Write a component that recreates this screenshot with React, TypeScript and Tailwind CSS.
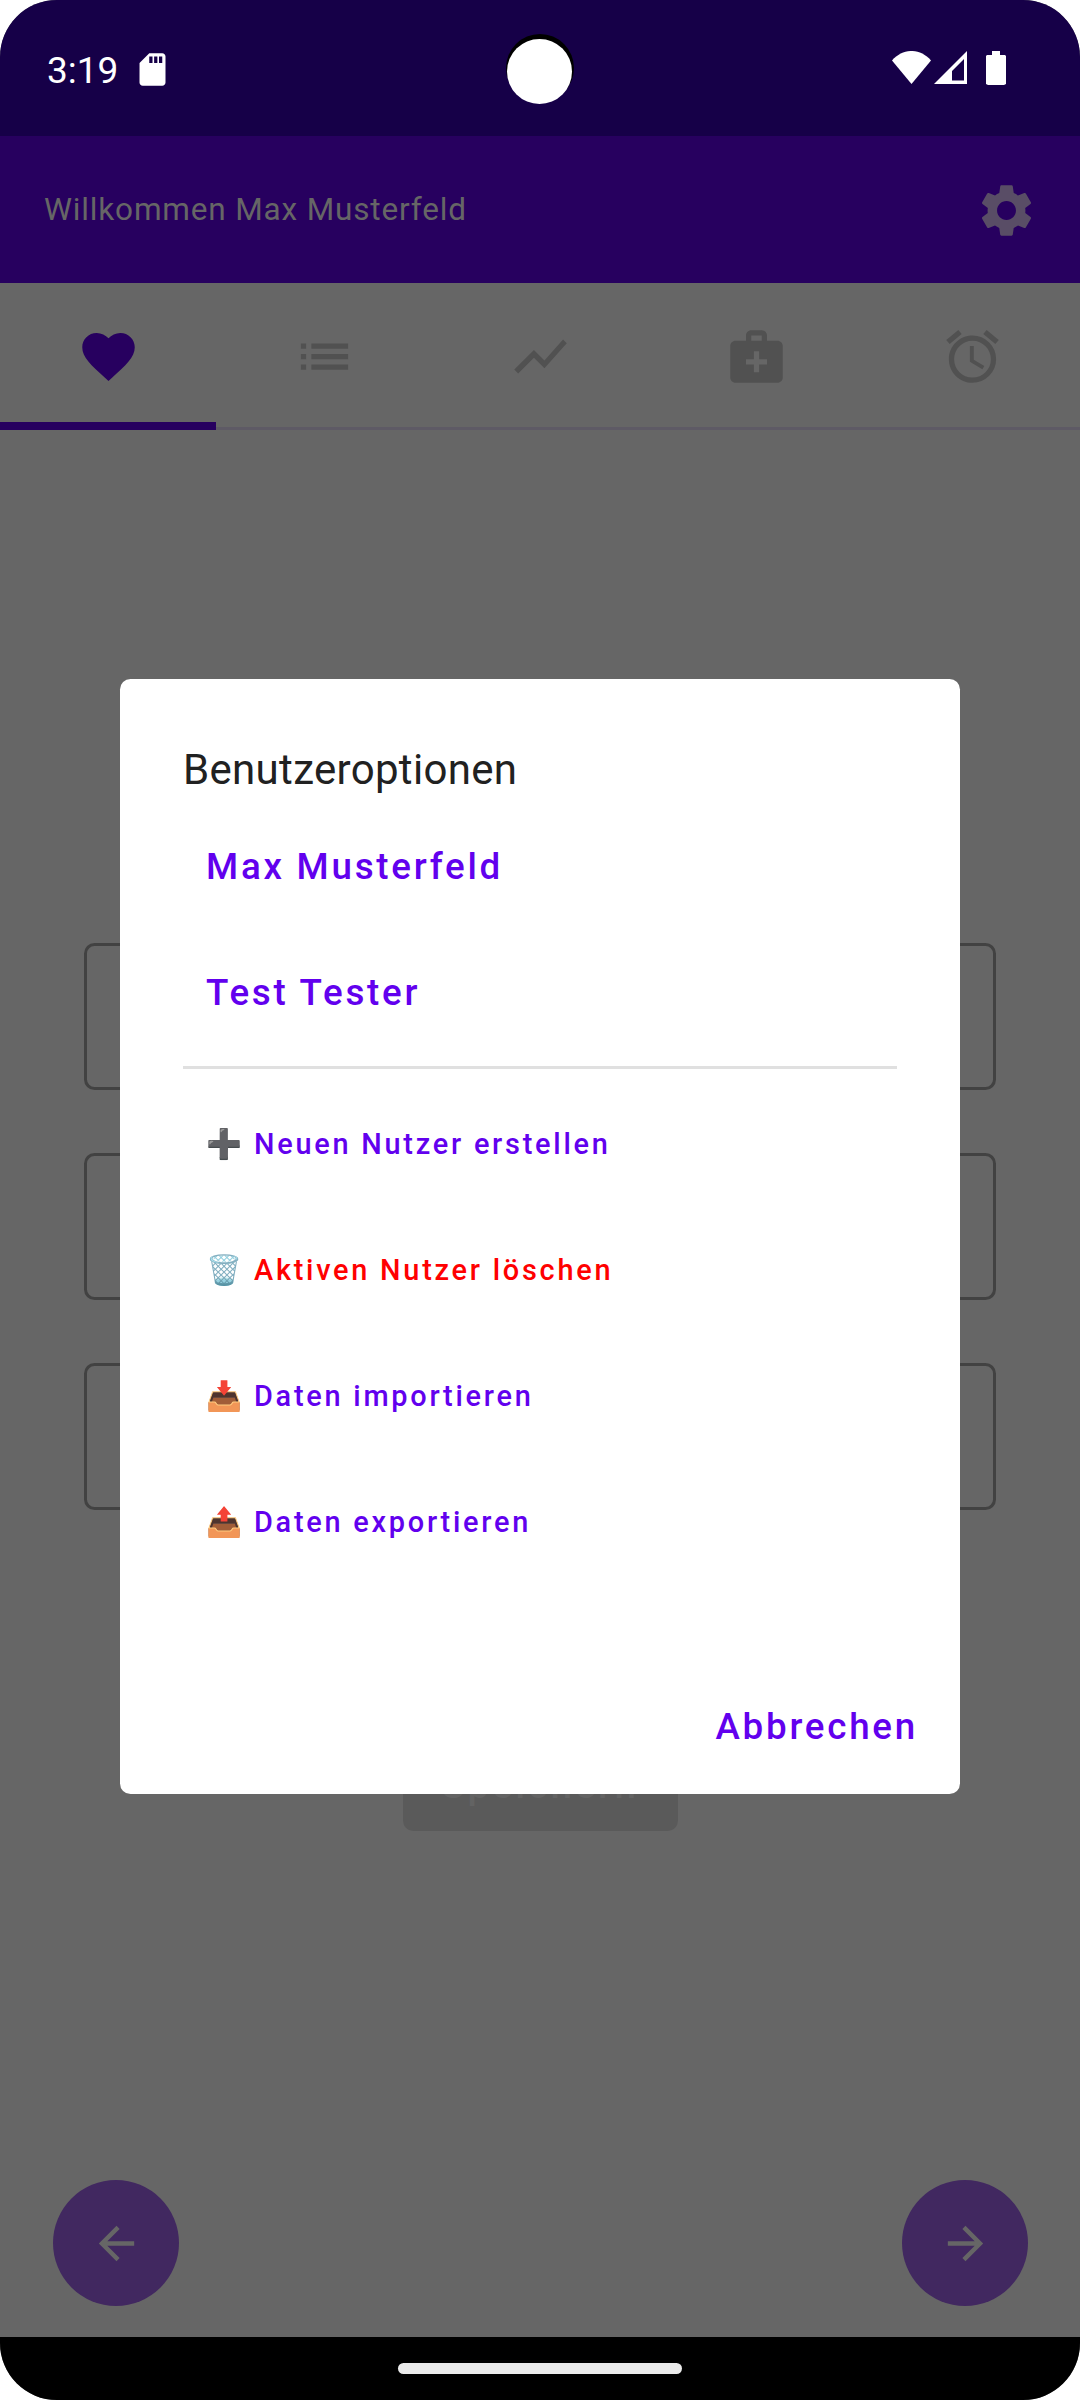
import React from "react";
import {
  MdAlarm,
  MdArrowBack,
  MdArrowForward,
  MdFavorite,
  MdList,
  MdMedicalServices,
  MdSdCard,
  MdSettings,
  MdShowChart,
} from "react-icons/md";

function StatusBar() {
  return (
    <div className="relative flex h-[136px] items-start justify-between bg-[#160048] text-white">
      <div className="flex">
        <span className="mt-[48px] ml-[47px] text-[37px] leading-[45px]">3:19</span>
        <MdSdCard className="mt-[49.5px] ml-[15px] size-[39px]" />
      </div>
      <div className="mt-[51px] mr-[74px] flex">
        <svg className="h-[33px] w-[39px]" viewBox="0 0 39 33" fill="currentColor">
          <path d="M0 9.5C11 -3.2 28 -3.2 39 9.5L19.5 33Z" />
        </svg>
        <svg className="ml-[3px] h-[33px] w-[33px]" viewBox="0 0 33 33" fill="currentColor">
          <path fillRule="evenodd" d="M33 0V33H0ZM30 8L18 20V29.5H30Z" />
        </svg>
        <svg className="ml-[19px] h-[34px] w-[20px]" viewBox="0 0 20 34" fill="currentColor">
          <path d="M6 0H14V4H19L20 5V33L18 34H2L0 33V5L1 4H6Z" />
        </svg>
      </div>
      <div className="absolute top-[34px] left-[506px] size-[68px] rounded-full bg-black" />
      <div className="absolute top-[39px] left-[507px] size-[65px] rounded-full bg-white" />
    </div>
  );
}

function AppBar() {
  return (
    <div className="flex h-[147px] items-center justify-between bg-[#27005f] pr-[42px] pl-[44px]">
      <span className="text-[31.5px] tracking-[0.84px] text-[#666666]">Willkommen Max Musterfeld</span>
      <MdSettings className="mt-[2px] size-[63px] text-[#594d66]" />
    </div>
  );
}

const TABS = [MdFavorite, MdList, MdShowChart, MdMedicalServices, MdAlarm];

function Tabs() {
  return (
    <div className="flex h-[147px]">
      {TABS.map((Icon, i) => (
        <div
          key={i}
          className={
            i === 0
              ? "flex flex-1 flex-col items-center border-b-8 border-[#27005f] pt-[42px] text-[#27005f]"
              : "flex flex-1 flex-col items-center border-b-3 border-[#5e5a65] pt-[42px] text-[#515151]"
          }
        >
          <Icon className="size-[63px] shrink-0" />
        </div>
      ))}
    </div>
  );
}

const ACTIONS = [
  { icon: "➕", label: "Neuen Nutzer erstellen", color: "text-[#6200ee]" },
  { icon: "🗑️", label: "Aktiven Nutzer löschen", color: "text-[#ff0000]" },
  { icon: "📥", label: "Daten importieren", color: "text-[#6200ee]" },
  { icon: "📤", label: "Daten exportieren", color: "text-[#6200ee]" },
];

function UserDialog() {
  return (
    <div className="absolute top-[679px] left-[120px] flex h-[1115px] w-[840px] flex-col rounded-[10.5px] bg-white px-[63px] pt-[66px] font-medium tracking-[2.75px] text-[#6200ee]">
      <h1 className="mb-[9px] text-[42px] leading-[50px] font-normal tracking-[0.32px] text-[#212121]">
        Benutzeroptionen
      </h1>
      {["Max Musterfeld", "Test Tester"].map((name) => (
        <button key={name} className="flex h-[126px] items-center pl-[23px] text-[36.75px]">
          {name}
        </button>
      ))}
      <hr className="mt-[10px] mb-[13px] border-t-3 border-[#e0e0e0]" />
      {ACTIONS.map(({ icon, label, color }) => (
        <button key={label} className={`flex h-[126px] items-center pl-[23px] text-[28.9px] ${color}`}>
          <span className="mr-[12px] w-[36px] text-[29px] tracking-normal">{icon}</span>
          {label}
        </button>
      ))}
      <button className="mt-auto mr-[-21px] mb-[4px] flex h-[126px] items-center self-end text-[36.75px]">
        Abbrechen
      </button>
    </div>
  );
}

export default function App() {
  return (
    <div className="h-[2400px] w-[1080px] overflow-hidden bg-white font-['Roboto',sans-serif]">
      <div className="relative flex h-full flex-col overflow-hidden rounded-[57px] bg-[#666666]">
        <StatusBar />
        <AppBar />
        <Tabs />
        <main className="flex flex-1 flex-col items-center">
          <div className="mt-[513px] flex w-[912px] flex-col gap-[63px]">
            <div className="h-[147px] rounded-[10.5px] border-3 border-[#424242]" />
            <div className="h-[147px] rounded-[10.5px] border-3 border-[#424242]" />
            <div className="h-[147px] rounded-[10.5px] border-3 border-[#424242]" />
          </div>
          <button className="mt-[223px] flex h-[98px] w-[275px] items-center justify-center rounded-[10.5px] bg-[#5a5a5a] pt-[6px] text-[38.5px] font-medium tracking-[2.75px] text-[#636363]">
            Speichern
          </button>
          <div className="mt-auto mb-[31px] flex w-full justify-between pr-[52px] pl-[53px]">
            <button className="flex size-[126px] items-center justify-center rounded-full bg-[#412860] text-[#666666]">
              <MdArrowBack className="size-[53px]" />
            </button>
            <button className="flex size-[126px] items-center justify-center rounded-full bg-[#412860] text-[#666666]">
              <MdArrowForward className="size-[53px]" />
            </button>
          </div>
        </main>
        <div className="flex h-[63px] justify-center bg-black pt-[26px]">
          <div className="h-[11px] w-[284px] rounded-full bg-[#ebebeb]" />
        </div>
        <UserDialog />
      </div>
    </div>
  );
}
